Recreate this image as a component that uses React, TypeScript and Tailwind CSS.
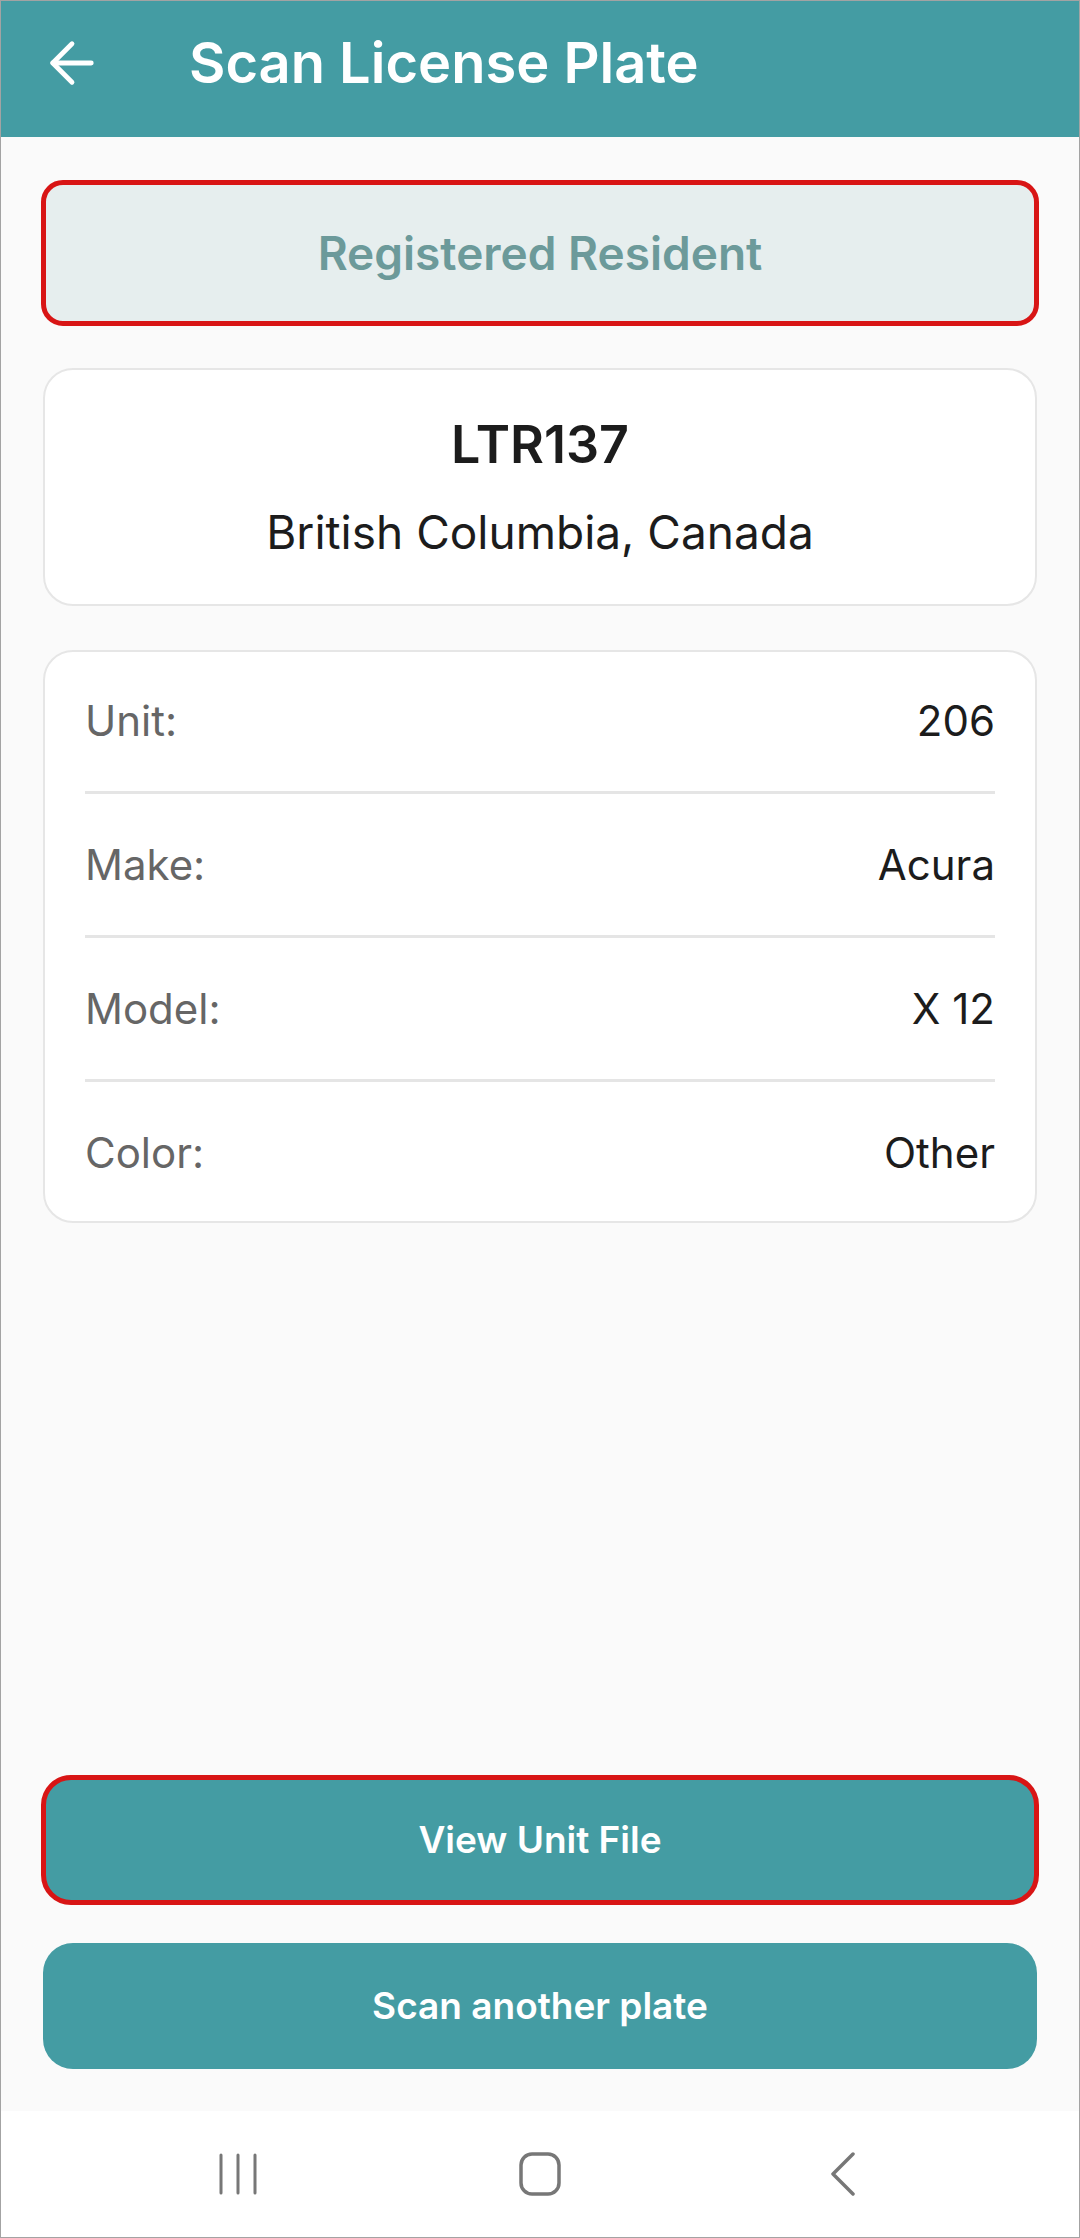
import { ArrowLeft } from 'lucide-react';

const rows = [
  { label: 'Unit:', value: '206' },
  { label: 'Make:', value: 'Acura' },
  { label: 'Model:', value: 'X 12' },
  { label: 'Color:', value: 'Other' },
];

export default function App() {
  return (
    <div
      className="w-[1080px] h-[2238px] flex flex-col border border-[#a3a3a3] bg-[#fafafa]"
      style={{ fontFamily: 'Inter, "Noto Sans", sans-serif' }}
    >
      {/* top bar */}
      <header className="h-[136px] shrink-0 bg-[#449ca3] flex items-center pb-[13px] text-white">
        <ArrowLeft className="ml-[38px] w-[66px] h-[66px]" strokeWidth={1.75} />
        <h1 className="ml-[84px] text-[56px] leading-none font-semibold">Scan License Plate</h1>
      </header>

      <main className="flex-1 flex flex-col px-[40px] pt-[43px] pb-[42px]">
        <div className="h-[146px] rounded-[22px] border-[5px] border-[#d81515] bg-[#e6eeee] flex items-center justify-center">
          <span className="text-[46px] font-semibold text-[#6c9a9a]">Registered Resident</span>
        </div>

        <section className="mt-[42px] mx-[2px] h-[238px] rounded-[30px] border-2 border-[#e6e6e6] bg-white flex flex-col items-center justify-center text-[#1c1c1c]">
          <div className="text-[52px] font-semibold leading-none">LTR137</div>
          <div className="mt-[38px] text-[46px] leading-none">British Columbia, Canada</div>
        </section>

        <section className="mt-[44px] mx-[2px] rounded-[30px] border-2 border-[#e6e6e6] bg-white px-[40px]">
          {rows.map((r, i) => (
            <div key={r.label}>
              {i > 0 && <div className="h-[3px] my-[2px] bg-[#e5e5e5]" />}
              <div className="h-[137px] flex items-center justify-between text-[42px]">
                <span className="text-[#666666]">{r.label}</span>
                <span className="text-[#1c1c1c]">{r.value}</span>
              </div>
            </div>
          ))}
        </section>

        <div className="flex-1" />

        <button className="h-[130px] rounded-[30px] border-[5px] border-[#d81515] bg-[#449ca3] text-white text-[37px] font-semibold">
          View Unit File
        </button>
        <button className="mt-[38px] mx-[2px] h-[126px] rounded-[30px] bg-[#449ca3] text-white text-[37px] font-semibold">
          Scan another plate
        </button>
      </main>

      {/* android nav bar */}
      <nav className="h-[126px] shrink-0 bg-white flex items-center justify-center gap-[258px] text-[#777777]">
        <svg width="44" height="44" viewBox="0 0 44 44" fill="none" stroke="currentColor" strokeWidth="3" strokeLinecap="round">
          <line x1="5" y1="3" x2="5" y2="41" />
          <line x1="22" y1="3" x2="22" y2="41" />
          <line x1="39" y1="3" x2="39" y2="41" />
        </svg>
        <svg width="44" height="44" viewBox="0 0 44 44" fill="none" stroke="currentColor" strokeWidth="3.5">
          <rect x="3" y="2" width="38" height="40" rx="11" />
        </svg>
        <svg width="44" height="44" viewBox="0 0 44 44" fill="none" stroke="currentColor" strokeWidth="3.5" strokeLinecap="round" strokeLinejoin="round">
          <polyline points="33,2 13,22 33,42" />
        </svg>
      </nav>
    </div>
  );
}
